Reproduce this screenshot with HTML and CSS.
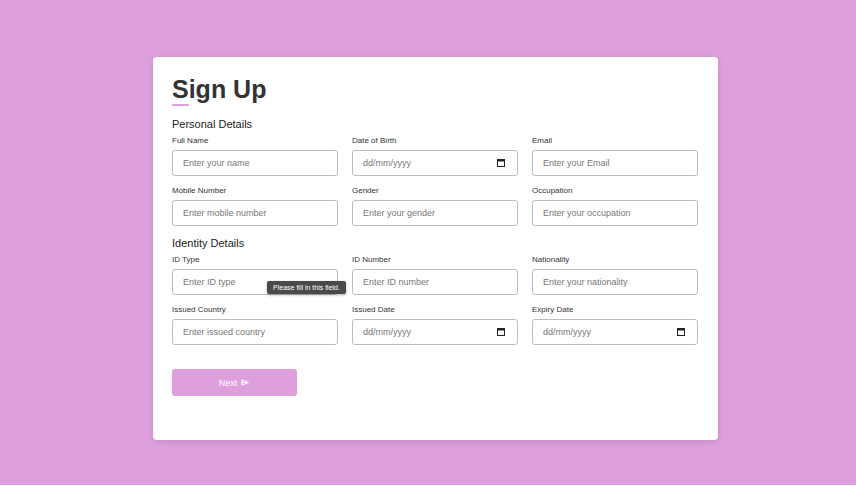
FILE: index.html
```html
<!DOCTYPE html>
<html lang="en">

<head>
    <title>Sign Up</title>
    <meta charset="UTF-8">
    <link rel="stylesheet" href="styles.css">
</head>

<body>
    <div class="page">
        <form class="card">
            <h1 class="title">Sign Up</h1>
            <div class="title-line"></div>

            <h2 class="section">Personal Details</h2>
            <div class="grid">
                <div class="field">
                    <label>Full Name</label>
                    <input type="text" placeholder="Enter your name" />
                </div>
                <div class="field">
                    <label>Date of Birth</label>
                    <div class="date-box">
                        <span>dd/mm/yyyy</span>
                        <svg class="cal" width="8" height="8" viewBox="0 0 8 8"><rect x="0.5" y="0.5" width="7" height="7" fill="none" stroke="#222" /><rect x="0.5" y="0.5" width="7" height="2" fill="#222" /></svg>
                    </div>
                </div>
                <div class="field">
                    <label>Email</label>
                    <input type="text" placeholder="Enter your Email" />
                </div>
                <div class="field">
                    <label>Mobile Number</label>
                    <input type="text" placeholder="Enter mobile number" />
                </div>
                <div class="field">
                    <label>Gender</label>
                    <input type="text" placeholder="Enter your gender" />
                </div>
                <div class="field">
                    <label>Occupation</label>
                    <input type="text" placeholder="Enter your occupation" />
                </div>
            </div>

            <h2 class="section second">Identity Details</h2>
            <div class="grid">
                <div class="field">
                    <label>ID Type</label>
                    <input type="text" placeholder="Enter ID type" />
                </div>
                <div class="field">
                    <label>ID Number</label>
                    <input type="text" placeholder="Enter ID number" />
                </div>
                <div class="field">
                    <label>Nationality</label>
                    <input type="text" placeholder="Enter your nationality" />
                </div>
                <div class="field">
                    <label>Issued Country</label>
                    <input type="text" placeholder="Enter issued country" />
                </div>
                <div class="field">
                    <label>Issued Date</label>
                    <div class="date-box">
                        <span>dd/mm/yyyy</span>
                        <svg class="cal" width="8" height="8" viewBox="0 0 8 8"><rect x="0.5" y="0.5" width="7" height="7" fill="none" stroke="#222" /><rect x="0.5" y="0.5" width="7" height="2" fill="#222" /></svg>
                    </div>
                </div>
                <div class="field">
                    <label>Expiry Date</label>
                    <div class="date-box">
                        <span>dd/mm/yyyy</span>
                        <svg class="cal" width="8" height="8" viewBox="0 0 8 8"><rect x="0.5" y="0.5" width="7" height="7" fill="none" stroke="#222" /><rect x="0.5" y="0.5" width="7" height="2" fill="#222" /></svg>
                    </div>
                </div>
            </div>

            <button type="button" class="next-btn">
                Next
                <svg width="9" height="7" viewBox="0 0 9 7"><path d="M1 0.8 L7.5 3.5 L1 6.2 Z" fill="none" stroke="#fff" stroke-width="1" /><path d="M0 3.5 H6" stroke="#fff" stroke-width="1" /></svg>
            </button>

            <!-- 浏览器校验提示 -->
            <div class="tooltip">Please fill in this field.</div>
        </form>
    </div>
</body>

</html>
```

FILE: styles.css
```css
html {
    background: #fff;
}

body {
    margin: 0 0 1px 0;
    background: #dda0dd;
    font-family: "Liberation Sans", Arial, sans-serif;
}

.page {
    display: flex;
    justify-content: center;
    padding: 57px 0 45px 15px;
}

.card {
    position: relative;
    box-sizing: border-box;
    width: 565px;
    height: 383px;
    padding: 18px 20px 0 19px;
    background: #fff;
    border-radius: 4px;
    box-shadow: 0 2px 6px rgba(0, 0, 0, 0.12);
}

.title {
    margin: 0;
    font-size: 25px;
    line-height: 29px;
    font-weight: bold;
    color: #333;
}

.title-line {
    width: 17px;
    height: 2px;
    background: #dda0dd;
}

.section {
    margin: 12px 0 5px;
    font-size: 11px;
    line-height: 13px;
    font-weight: normal;
    color: #222;
}

.section.second {
    margin-top: 11px;
}

.grid {
    display: grid;
    grid-template-columns: repeat(3, 166px);
    column-gap: 14px;
    row-gap: 10px;
}

.field {
    display: flex;
    flex-direction: column;
}

.field label {
    font-size: 8px;
    line-height: 10px;
    color: #333;
    margin-bottom: 4px;
}

.field input,
.date-box {
    box-sizing: border-box;
    height: 26px;
    width: 166px;
    padding: 0 0 0 10px;
    border: 1px #bcbcbc solid;
    border-radius: 3px;
    font-family: "Liberation Sans", Arial, sans-serif;
    font-size: 9px;
    color: #222;
    background: #fff;
    outline: none;
}

.field input::placeholder {
    color: #777;
}

.date-box {
    display: flex;
    align-items: center;
    justify-content: space-between;
    padding-right: 12px;
    color: #777;
}

.cal {
    display: block;
}

.next-btn {
    display: flex;
    align-items: center;
    justify-content: center;
    gap: 4px;
    margin-top: 24px;
    width: 125px;
    height: 27px;
    padding: 0;
    border: none;
    border-radius: 3px;
    background: #dda0dd;
    color: #fff;
    font-family: "Liberation Sans", Arial, sans-serif;
    font-size: 9px;
    cursor: pointer;
}

.tooltip {
    position: absolute;
    left: 114px;
    top: 224px;
    width: 79px;
    height: 13px;
    box-sizing: border-box;
    background: #4a4a4a;
    color: #fff;
    font-size: 7px;
    line-height: 13px;
    text-align: center;
    border-radius: 2px;
    box-shadow: 0 1px 3px rgba(0, 0, 0, 0.3);
}
```
